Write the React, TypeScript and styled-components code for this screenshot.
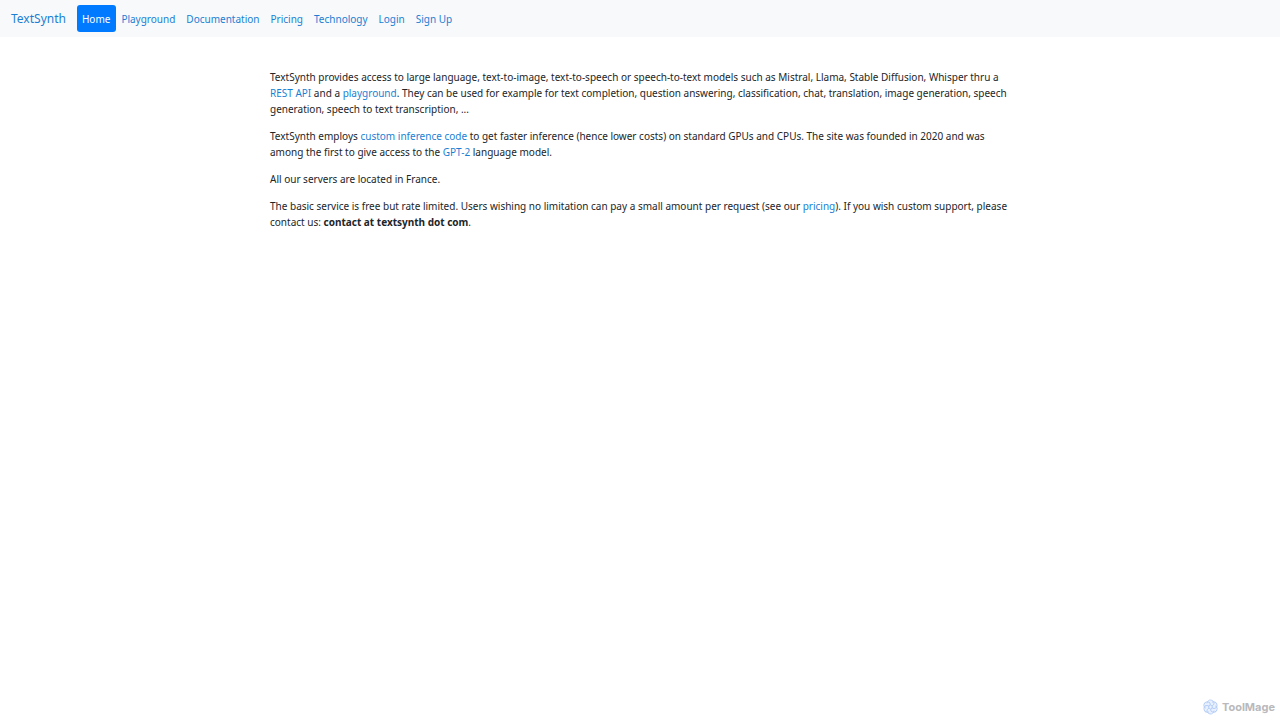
import React from "react";
import styled, { createGlobalStyle } from "styled-components";

const GlobalStyle = createGlobalStyle`
  *, *::before, *::after { box-sizing: border-box; }
  body {
    margin: 0;
    background: #fff;
    color: #212529;
    font: 10px/16px "Noto Sans", "Open Sans", sans-serif;
  }
  a { color: #1a7fd4; text-decoration: none; }
`;

const Page = styled.div`
  min-height: 100vh;
  display: flex;
  flex-direction: column;
`;

const Navbar = styled.nav`
  display: flex;
  align-items: center;
  padding: 5px 11px;
  background: #f8f9fa;
`;

const Brand = styled.a`
  margin-right: 11px;
  font-size: 12px;
  line-height: 20px;
`;

const NavList = styled.ul`
  display: flex;
  margin: 0;
  padding: 0;
  list-style: none;
`;

const NavLink = styled.a<{ $active?: boolean }>`
  display: block;
  padding: 6px 6px 5px 5px;
  border-radius: 3px;
  background: ${(p) => (p.$active ? "#007bff" : "transparent")};
  && { color: ${(p) => (p.$active ? "#fff" : "#1a7fd4")}; }
`;

const Main = styled.main`
  flex: 1;
  width: 100%;
  max-width: 760px;
  margin: 0 auto;
  padding: 32px 10px 0;
`;

const Paragraph = styled.p`
  margin: 0 0 11px;
`;

const Footer = styled.footer`
  display: flex;
  justify-content: flex-end;
  align-items: center;
  gap: 4px;
  padding: 5px;
  color: #b9b9bb;
  font: 700 11px/16px Inter, sans-serif;
`;

const links = ["Home", "Playground", "Documentation", "Pricing", "Technology", "Login", "Sign Up"];
const petals = [0, 60, 120, 180, 240, 300];

export default function App() {
  return (
    <Page>
      <GlobalStyle />
      <Navbar>
        <Brand href="#">TextSynth</Brand>
        <NavList>
          {links.map((label, i) => (
            <li key={label}>
              <NavLink href="#" $active={i === 0}>{label}</NavLink>
            </li>
          ))}
        </NavList>
      </Navbar>
      <Main>
        <Paragraph>
          TextSynth provides access to large language, text-to-image, text-to-speech or speech-to-text models such as Mistral, Llama, Stable Diffusion, Whisper thru a <a href="#">REST API</a> and a <a href="#">playground</a>. They can be used for example for text completion, question answering, classification, chat, translation, image generation, speech generation, speech to text transcription, ...
        </Paragraph>
        <Paragraph>
          TextSynth employs <a href="#">custom inference code</a> to get faster inference (hence lower costs) on standard GPUs and CPUs. The site was founded in 2020 and was among the first to give access to the <a href="#">GPT-2</a> language model.
        </Paragraph>
        <Paragraph>All our servers are located in France.</Paragraph>
        <Paragraph>
          The basic service is free but rate limited. Users wishing no limitation can pay a small amount per request (see our <a href="#">pricing</a>). If you wish custom support, please contact us: <b>contact at textsynth dot com</b>.
        </Paragraph>
      </Main>
      <Footer>
        <svg width="15" height="16" viewBox="-7.5 -8 15 16" fill="none" stroke="#b4cdf8" strokeWidth="1" strokeLinecap="round" aria-hidden="true">
          <circle r="6" fill="#e9f1fe" stroke="none" />
          {petals.map((angle) => (
            <path key={angle} transform={`rotate(${angle})`} d="M-3.500 -4C-3 -6.200 -1.500 -7.200 0.500 -6.900C3.200 -6.500 4.300 -3.800 2.800 -2C1.900 -1 .4 -1.200 0 -2.200" />
          ))}
        </svg>
        ToolMage
      </Footer>
    </Page>
  );
}
